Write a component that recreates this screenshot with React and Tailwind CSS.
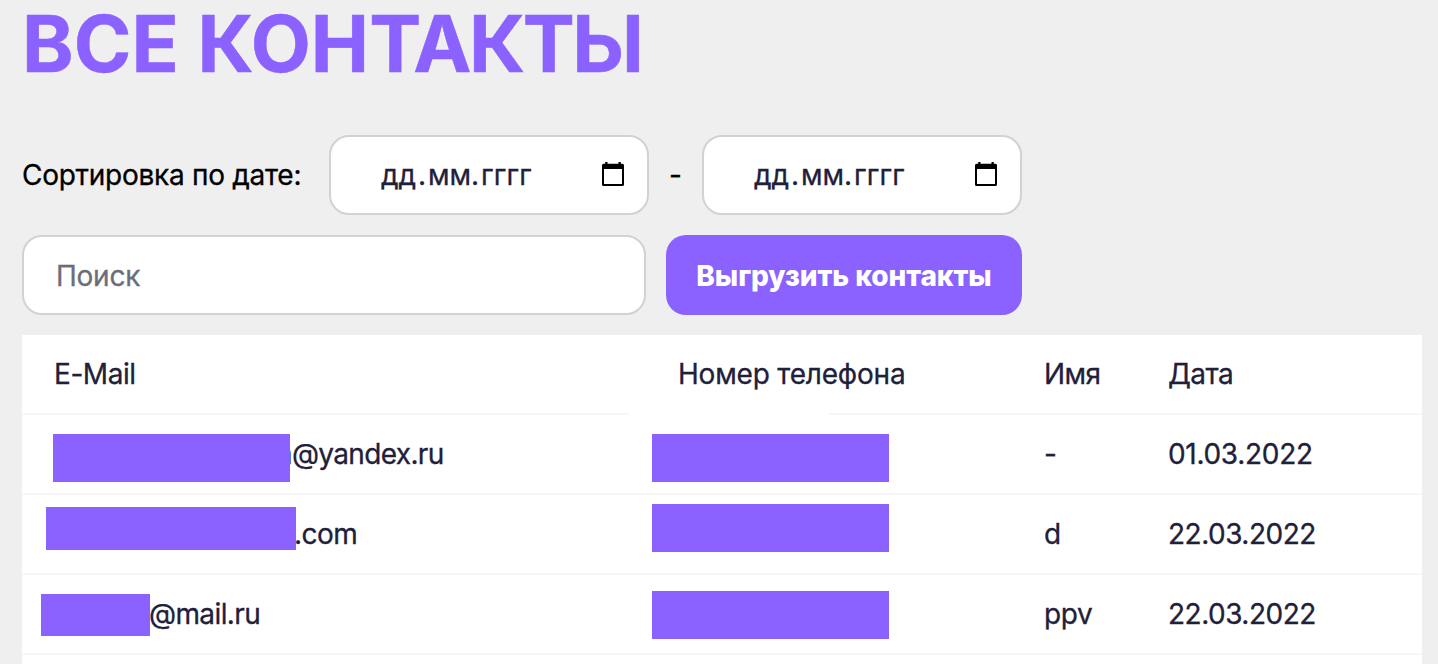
const CalendarIcon = () => (
  <svg className="mb-[2px] block h-6 w-[22px] shrink-0" viewBox="0 0 22 24" fill="none">
    <path d="M3.2 0h2.3v3H3.2zM16.5 0h2.3v3h-2.3z" fill="#000" />
    <path fillRule="evenodd" d="M1.6 1.7h18.8a1.6 1.6 0 0 1 1.6 1.6v19.1a1.6 1.6 0 0 1-1.6 1.6H1.6a1.6 1.6 0 0 1-1.6-1.6V3.300a1.6 1.6 0 0 1 1.6-1.6zM2 7v15h18V7z" fill="#000" />
  </svg>
);

const DateField = () => (
  <div className="flex h-20 w-80 shrink-0 items-center justify-between rounded-[20px] border-2 border-[#d2d2d5] bg-white pr-[23px] pl-[50px] text-[#1f203a]">
    <div className="flex items-center">
      <span className="w-[37px]">дд</span>
      <span className="w-[10px]">.</span>
      <span className="w-[43px]">мм</span>
      <span className="w-[10px]">.</span>
      <span className="tracking-[0.1px]">гггг</span>
    </div>
    <CalendarIcon />
  </div>
);

const rows = [
  {
    email: "n@yandex.ru",
    emailPad: "pl-[254px] tracking-[-0.65px]",
    emailMask: "left-[31px] top-[19px] h-12 w-[237px]",
    phoneMask: "top-[19px]",
    name: "-",
    date: "01.03.2022",
    dateTracking: "tracking-[-0.3px]",
  },
  {
    email: ".com",
    emailPad: "pl-[272px] tracking-[-0.5px]",
    emailMask: "left-[24px] top-[12px] h-[43px] w-[250px]",
    phoneMask: "top-[9px]",
    name: "d",
    date: "22.03.2022",
    dateTracking: "tracking-[-0.5px]",
  },
  {
    email: "@mail.ru",
    emailPad: "pl-[127px] tracking-[-0.6px]",
    emailMask: "left-[19px] top-[19px] h-[42px] w-[109px]",
    phoneMask: "top-[16px]",
    name: "ppv",
    date: "22.03.2022",
    dateTracking: "tracking-[-0.5px]",
  },
];

const rowClass =
  "relative grid h-20 grid-cols-[624px_366px_124px_286px] items-center border-b-2 border-[#f7f7f8]";

export default function App() {
  return (
    <main className="flex h-[664px] w-[1438px] flex-col overflow-hidden bg-[#efefef] pl-[22px] font-['Inter',sans-serif] text-[28px] leading-[34px] text-black [-webkit-text-stroke:0.3px]">
      <h1 className="h-[135px] shrink-0 text-[78px] leading-[88px] font-bold tracking-[0.1px] whitespace-nowrap text-[#8b61ff] [-webkit-text-stroke:0.5px]">
        ВСЕ КОН<span className="tracking-[-8px]">Т</span>
        <span className="tracking-[-2.5px]">АКТЫ</span>
      </h1>

      <div className="flex h-20 shrink-0 items-center">
        <span className="w-[307px] shrink-0 tracking-[-0.27px]">Сортировка по дате:</span>
        <DateField />
        <span className="w-[53px] shrink-0 text-center">-</span>
        <DateField />
      </div>

      <div className="mt-5 flex h-20 shrink-0 gap-5">
        <input
          type="text"
          placeholder="Поиск"
          className="h-20 w-[624px] rounded-[20px] border-2 border-[#d2d2d5] bg-white px-8 pt-0.5 tracking-[-0.25px] text-[#1f203a] placeholder:text-[#6c6d7c]"
        />
        <button className="h-20 w-[356px] rounded-[20px] bg-[#8b61ff] pt-0.5 font-extrabold tracking-[-0.08px] whitespace-nowrap text-white [-webkit-text-stroke:0]">
          Выгрузить контакты
        </button>
      </div>

      <section className="mt-5 w-[1400px] shrink-0 bg-white text-[#1f203a]">
        <div className={rowClass}>
          <span className="pl-8 tracking-[-0.45px]">E-Mail</span>
          <span className="pl-8 tracking-[-0.2px]">Номер телефона</span>
          <span className="pl-8 tracking-[-0.6px]">Имя</span>
          <span className="pl-8 tracking-[-0.6px]">Дата</span>
          <i className="absolute top-[78px] left-[607px] h-0.5 w-[200px] bg-white" />
        </div>
        {rows.map((row, i) => (
          <div key={i} className={rowClass}>
            <span className={row.emailPad}>{row.email}</span>
            <span />
            <span className="pl-8 tracking-[-0.4px]">{row.name}</span>
            <span className={`pl-8 ${row.dateTracking}`}>{row.date}</span>
            <i className={`absolute bg-[#8b61ff] ${row.emailMask}`} />
            <i className={`absolute left-[630px] h-12 w-[237px] bg-[#8b61ff] ${row.phoneMask}`} />
          </div>
        ))}
        <div className="h-20" />
      </section>
    </main>
  );
}
